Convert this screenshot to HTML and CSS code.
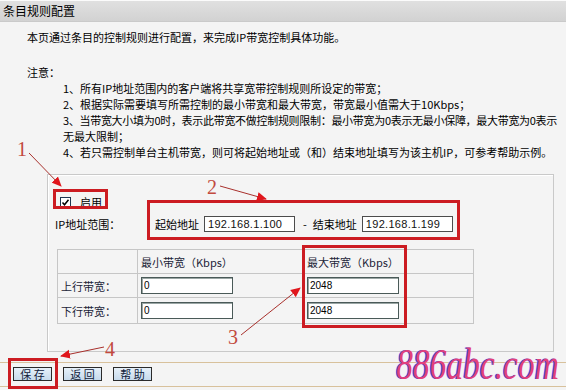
FILE: index.html
```html
<!DOCTYPE html>
<html lang="zh-CN">
<head>
  <meta charset="UTF-8" />
  <title>条目规则配置</title>
  <link rel="stylesheet" href="styles.css">
</head>
<body>
  <div class="page">
    <div class="title-bar">条目规则配置</div>

    <p class="intro">本页通过条目的控制规则进行配置，来完成IP带宽控制具体功能。</p>

    <div class="notes">
      <div class="notes-head">注意：</div>
      <div class="note-list">
        <div>1、所有IP地址范围内的客户端将共享宽带控制规则所设定的带宽；</div>
        <div>2、根据实际需要填写所需控制的最小带宽和最大带宽，带宽最小值需大于10Kbps；</div>
        <div class="tight">3、当带宽大小填为0时，表示此带宽不做控制规则限制：最小带宽为0表示无最小保障，最大带宽为0表示</div>
        <div>无最大限制；</div>
        <div>4、若只需控制单台主机带宽，则可将起始地址或（和）结束地址填写为该主机IP，可参考帮助示例。</div>
      </div>
    </div>

    <div class="panel">
      <div class="enable-row">
        <svg class="check" width="11" height="11" viewBox="0 0 11 11">
          <rect x="0.5" y="0.5" width="10" height="10" fill="#fff" stroke="#1e3550"/>
          <polyline points="2.5,5.5 4.5,7.8 8.5,2.8" fill="none" stroke="#000" stroke-width="1.5"/>
        </svg>
        <span>启用</span>
      </div>

      <div class="ip-row">
        <span class="ip-label">IP地址范围：</span>
        <span>起始地址</span>
        <input class="ip-field" type="text" value="192.168.1.100">
        <span class="dash">-</span>
        <span>结束地址</span>
        <input class="ip-field" type="text" value="192.168.1.199">
      </div>

      <table class="bw-table">
        <tr class="head-row">
          <td class="c-label"></td>
          <td class="c-min">最小带宽（Kbps）</td>
          <td class="c-max">最大带宽（Kbps）</td>
        </tr>
        <tr>
          <td>上行带宽：</td>
          <td><input class="bw-field" type="text" value="0"></td>
          <td><input class="bw-field" type="text" value="2048"></td>
        </tr>
        <tr class="last-row">
          <td>下行带宽：</td>
          <td><input class="bw-field" type="text" value="0"></td>
          <td><input class="bw-field" type="text" value="2048"></td>
        </tr>
      </table>
    </div>

    <div class="actions">
      <button class="btn">保 存</button>
      <button class="btn">返 回</button>
      <button class="btn">帮 助</button>
    </div>

    <div class="brand">886abc.com</div>

    <!-- annotation layer drawn over the screenshot -->
    <svg class="marks" width="566" height="390" viewBox="0 0 566 390">
      <defs>
        <marker id="head" viewBox="0 0 10 10" refX="9" refY="5" markerWidth="10" markerHeight="10" markerUnits="userSpaceOnUse" orient="auto">
          <path d="M0,0.5 L10,5 L0,9.5 z" fill="#e0161c"/>
        </marker>
      </defs>
      <g fill="none" stroke="#cc1c22" stroke-width="3">
        <rect x="54.5" y="190.5" width="52" height="17"/>
        <rect x="148.5" y="201.5" width="310" height="37"/>
        <rect x="303.5" y="246.5" width="102" height="80"/>
        <rect x="9.5" y="359.5" width="47" height="28"/>
      </g>
      <g stroke="#a8302c" stroke-width="1" marker-end="url(#head)">
        <line x1="29" y1="153" x2="61" y2="186"/>
        <line x1="220" y1="186" x2="266" y2="199"/>
        <line x1="241" y1="335" x2="300" y2="288"/>
        <line x1="104" y1="347" x2="61" y2="356"/>
      </g>
      <g class="num" fill="#c24a3e">
        <text x="17" y="156">1</text>
        <text x="207" y="194">2</text>
        <text x="228" y="344">3</text>
        <text x="105" y="356">4</text>
      </g>
    </svg>
  </div>
</body>
</html>
```

FILE: styles.css
```css
body {
  margin: 0;
  background: #f4f4f4;
  font-family: "Noto Sans CJK SC", sans-serif;
  font-size: 11px;
  color: #000;
}

.page {
  position: relative;
  width: 566px;
  height: 390px;
  overflow: hidden;
}

.title-bar {
  box-sizing: border-box;
  height: 22px;
  line-height: 20px;
  padding-left: 3px;
  font-size: 12px;
  background: linear-gradient(#e0e0e0, #d2d2d2);
  border-top: 1px solid #fbfbfb;
  border-bottom: 1px solid #cacaca;
}

.intro {
  margin: 7px 0 0 27px;
  line-height: 17px;
}

.notes {
  margin-top: 18px;
  padding-left: 27px;
  line-height: 16px;
  white-space: nowrap;
}

.note-list {
  padding-left: 36px;
}

.tight {
  letter-spacing: -0.3px;
}

.panel {
  margin: 14px 12px 0 47px;
  border: 1px solid #c9c9c9;
  box-shadow: inset 1px 1px 0 #fff;
  padding: 19px 0 27px 7px;
}

.enable-row {
  display: flex;
  align-items: center;
  gap: 9px;
  height: 16px;
  padding-left: 5px;
}

.ip-row {
  display: flex;
  align-items: center;
  height: 16px;
  margin-top: 6px;
}

.ip-label {
  width: 100px;
}

.ip-field {
  box-sizing: border-box;
  width: 91px;
  height: 16px;
  margin-left: 5px;
  padding: 0 3px;
  border: 1px solid #4c4c4c;
  background: #fff;
  font-family: "Liberation Sans", sans-serif;
  font-size: 11px;
  letter-spacing: 0.3px;
  color: #111;
}

.dash {
  margin: 0 6px 0 8px;
}

.bw-table {
  margin: 17px 0 0 2px;
  width: 417px;
  border-collapse: collapse;
  color: #1c2438;
}

.bw-table td {
  border: 1px solid #c6c6c6;
  height: 23px;
  padding: 0 3px;
}

.bw-table .last-row td {
  height: 25px;
}

.c-label {
  width: 73px;
}

.c-min {
  width: 159px;
}

.bw-field {
  box-sizing: border-box;
  display: block;
  width: 92px;
  height: 17px;
  padding: 0 2px;
  border: 1px solid #4a5a58;
  box-shadow: inset 1px 1px 0 #9aa6a4;
  background: #fff;
  font-family: "Liberation Sans", sans-serif;
  font-size: 10px;
  color: #000;
}

.actions {
  display: flex;
  gap: 11px;
  margin-top: 10px;
  padding: 4px 0 5px 13px;
  border-top: 1px solid #d8c19c;
  border-bottom: 1px solid #d8c19c;
}

.btn {
  width: 39px;
  height: 14px;
  padding: 0;
  border: 1px solid #2a2a2a;
  background: linear-gradient(#e6f0f9, #c6daec);
  font-family: "Noto Sans CJK SC", sans-serif;
  font-size: 11px;
  line-height: 12px;
  color: #10203a;
}

.brand {
  position: absolute;
  top: 345px;
  right: 4px;
  padding-right: 4px;
  font-family: "Liberation Serif", serif;
  font-style: italic;
  font-size: 44px;
  line-height: 40px;
  color: #e2407c;
  text-shadow: -1.5px 0 0 #4b4be6;
  transform: scaleX(0.76);
  transform-origin: right top;
}

.marks {
  position: absolute;
  top: 0;
  left: 0;
  pointer-events: none;
}

.num text {
  font-family: "Liberation Serif", serif;
  font-size: 20px;
}
```
